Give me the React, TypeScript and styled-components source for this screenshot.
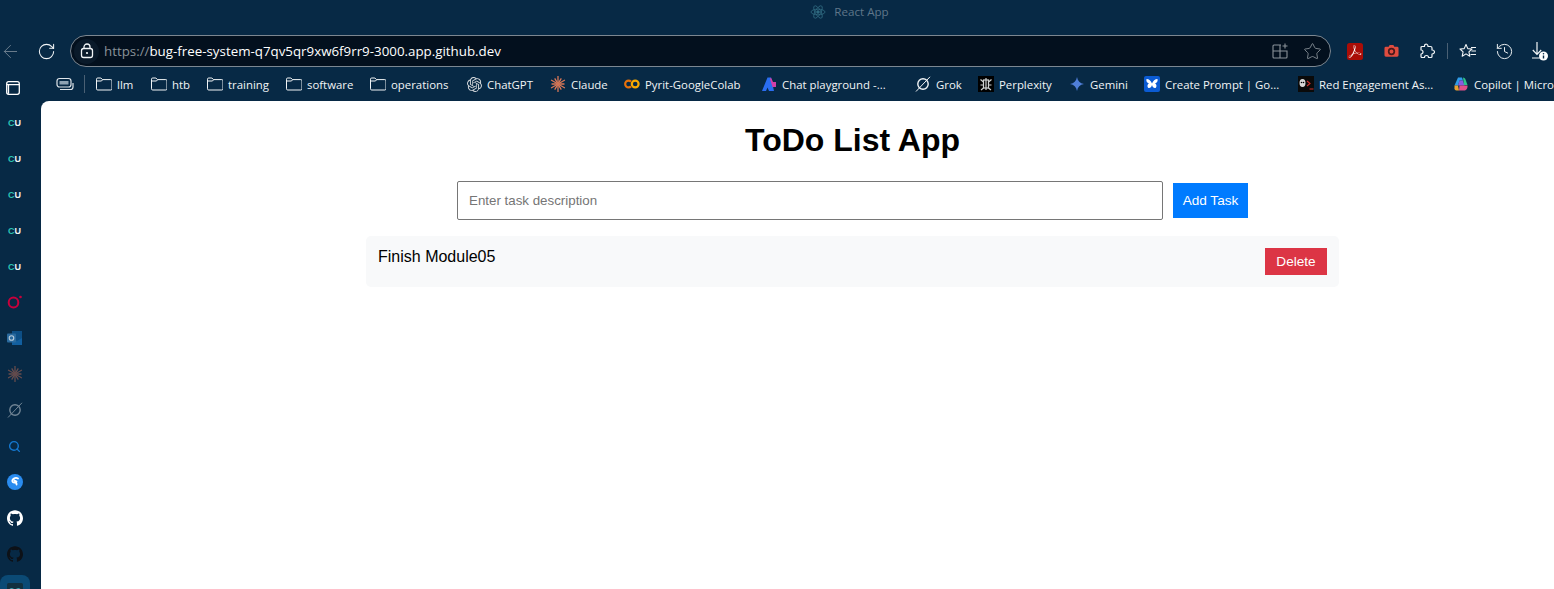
import React from "react";
import styled, { createGlobalStyle } from "styled-components";
import { ArrowLeft, RotateCw, Star, History, Search } from "lucide-react";
import { SiOpenai, SiGithub, SiAdobeacrobatreader } from "react-icons/si";

const chrome = "#072945";

const GlobalStyle = createGlobalStyle`
  html, body {
    margin: 0;
    padding: 0;
    width: 1554px;
    height: 589px;
    overflow: hidden;
    background: ${chrome};
  }
  * { box-sizing: border-box; }
`;

const Window = styled.div`
  width: 1554px;
  height: 589px;
  overflow: hidden;
  display: flex;
  flex-direction: column;
  background: ${chrome};
  font-family: "Open Sans", "Noto Sans", sans-serif;
  color: #fff;
`;

const TitleBar = styled.div`
  height: 35px;
  flex: none;
  display: flex;
  align-items: center;
  justify-content: center;
  gap: 8px;
  padding-bottom: 12px;
  padding-left: 145px;
  font-size: 11.6px;
  color: #5f7689;
`;

const NavBar = styled.div`
  height: 32px;
  flex: none;
  display: flex;
  align-items: center;
  margin-left: -8px;
`;

const NavButton = styled.div<{ $dim?: boolean }>`
  width: 36px;
  height: 32px;
  flex: none;
  display: flex;
  align-items: center;
  justify-content: center;
  color: ${(p) => (p.$dim ? "#6d7f8f" : "#f2f5f7")};
`;

const AddressBar = styled.div`
  width: 1261px;
  height: 32px;
  flex: none;
  margin: 0 6px;
  display: flex;
  align-items: center;
  padding: 0 2px 0 3px;
  background: #03101e;
  border: 1px solid #7c8791;
  border-radius: 16px;
`;

const LockPill = styled.div`
  width: 25px;
  height: 25px;
  flex: none;
  display: flex;
  align-items: center;
  justify-content: center;
  border-radius: 13px;
  background: #0a1a2a;
  color: #f2f5f7;
`;

const Url = styled.div`
  flex: 1;
  margin-left: 5px;
  font-size: 13.33px;
  white-space: nowrap;
  color: #fff;
  span {
    color: #8a9299;
  }
`;

const AddressAction = styled.div`
  width: 32px;
  display: flex;
  justify-content: center;
  color: #8a9299;
`;

const ToolbarDivider = styled.div`
  width: 1px;
  height: 16px;
  margin: 0 2px;
  flex: none;
  background: #4a6074;
`;

const BookmarksBar = styled.div`
  height: 34px;
  flex: none;
  display: flex;
  align-items: center;
  padding-left: 5px;
  font-size: 11.4px;
  white-space: nowrap;
`;

const PanelSlot = styled.span`
  width: 16px;
  height: 16px;
  flex: none;
  margin: 8px 35px 0 0;
`;

const TabsSlot = styled.span`
  width: 18px;
  height: 16px;
  flex: none;
`;

const BarDivider = styled.div`
  width: 1px;
  height: 18px;
  margin: 0 11px 0 10px;
  flex: none;
  background: #4a6074;
`;

const Bookmark = styled.div<{ $width: number }>`
  width: ${(p) => p.$width}px;
  flex: none;
  display: flex;
  align-items: center;
  gap: 5px;
  color: #f1f4f6;
`;

const BookmarkIcon = styled.span`
  width: 16px;
  height: 16px;
  flex: none;
  display: flex;
  align-items: center;
  justify-content: center;
`;

const Body = styled.div`
  flex: 1;
  min-height: 0;
  display: flex;
`;

const Sidebar = styled.div`
  width: 41px;
  flex: none;
  padding-top: 3px;
  display: flex;
  flex-direction: column;
  align-items: flex-start;
`;

const SideItem = styled.div<{ $faded?: boolean }>`
  width: 29px;
  height: 36px;
  flex: none;
  display: flex;
  align-items: center;
  justify-content: center;
  opacity: ${(p) => (p.$faded ? 0.45 : 1)};
`;

const ActiveSideItem = styled.div`
  width: 30px;
  height: 30px;
  flex: none;
  margin-top: 3px;
  padding-top: 8px;
  display: flex;
  justify-content: center;
  border-radius: 8px;
  background: #0b4a75;
`;

const CuBadge = styled.span`
  font-family: "Liberation Sans", sans-serif;
  font-size: 9px;
  font-weight: 700;
  color: #f0f4f5;
  padding-top: 2px;
  b {
    color: #2cc4b4;
  }
`;

const Main = styled.main`
  width: 1623px;
  flex: none;
  background: #fff;
  border-top-left-radius: 8px;
  padding-top: 21px;
  font-family: "Liberation Sans", Arial, sans-serif;
  color: #000;
`;

const Heading = styled.h1`
  margin: 0 0 22px;
  font-size: 32px;
  line-height: 37px;
  font-weight: 700;
  text-align: center;
`;

const TaskForm = styled.form`
  width: 791px;
  margin: 0 auto 16px;
  display: flex;
  align-items: center;
  gap: 10px;
`;

const TaskInput = styled.input`
  flex: 1;
  height: 39px;
  padding: 0 11px;
  border: 1px solid #767676;
  border-radius: 2px;
  font-family: inherit;
  font-size: 13.33px;
  &::placeholder {
    color: #757575;
  }
`;

const ActionButton = styled.button<{ $color: string }>`
  border: none;
  padding: 0;
  color: #fff;
  background: ${(p) => p.$color};
  font-family: inherit;
  font-size: 13.6px;
`;

const AddButton = styled(ActionButton)`
  width: 75px;
  height: 35px;
`;

const DeleteButton = styled(ActionButton)`
  width: 62px;
  height: 27px;
`;

const TaskCard = styled.div`
  width: 973px;
  margin: 0 auto;
  padding: 12px;
  display: flex;
  justify-content: space-between;
  align-items: flex-start;
  background: #f8f9fa;
  border-radius: 5px;
`;

const TaskText = styled.span`
  font-size: 16px;
  line-height: 18px;
`;

const ReactLogo = () => (
  <svg width="16" height="16" viewBox="-12 -12 24 24" fill="none" stroke="#2f6a80" strokeWidth="1.2">
    <circle r="2" fill="#2f6a80" />
    <ellipse rx="10.5" ry="4.2" />
    <ellipse rx="10.5" ry="4.2" transform="rotate(60)" />
    <ellipse rx="10.5" ry="4.2" transform="rotate(120)" />
  </svg>
);

const LockIcon = () => (
  <svg width="14" height="16" viewBox="0 0 14 16" fill="none" stroke="currentColor" strokeWidth="1.3">
    <rect x="1.5" y="5.5" width="11" height="9" rx="2.2" />
    <path d="M4 5.500V4a3 3 0 0 1 6 0v1.500" />
    <circle cx="7" cy="10" r="1.100" fill="currentColor" stroke="none" />
  </svg>
);

const PanelIcon = () => (
  <svg width="16" height="16" viewBox="0 0 16 16" fill="none" stroke="#fff" strokeWidth="1.3">
    <rect x="1.700" y="1.700" width="12.600" height="12.600" rx="2" />
    <path d="M2 4.700h12M3.500 4.700v9" />
  </svg>
);

const SplitIcon = () => (
  <svg width="16" height="16" viewBox="0 0 16 16" fill="none" stroke="currentColor" strokeWidth="1.1">
    <path d="M9 2H2a1 1 0 0 0-1 1v11a1 1 0 0 0 1 1h12a1 1 0 0 0 1-1V8H1" />
    <path d="M8 2v13M13 0.500v5M10.500 3h5" />
  </svg>
);

const PuzzleIcon = () => (
  <svg width="16" height="16" viewBox="0 0 16 16" fill="none" stroke="#f2f5f7" strokeWidth="1.2" strokeLinejoin="round">
    <path d="M6 1.500c1.500-1 3 0 3 2h2.500A1.500 1.500 0 0 1 13 5v2c1.500 0 2.500.8 2.500 2s-1 2-2.500 2v2.500a1 1 0 0 1-1 1H9.500c0-1.500-.8-2-2-2s-2 .5-2 2H3a1 1 0 0 1-1-1V11c1.300 0 2-1 2-2S3.300 7 2 7V4.500a1 1 0 0 1 1-1h2.500c0-.8 0-1.500.5-2z" />
  </svg>
);

const FavoritesIcon = () => (
  <svg width="18" height="18" viewBox="0 0 18 18" fill="none" stroke="#f2f5f7" strokeWidth="1.1" strokeLinejoin="round">
    <path d="M7 2.500l1.800 4.100 4.200.4-3.100 2.900.9 4.300L7 11.900l-3.800 2.300.9-4.300L1 7l4.200-.4z" />
    <path d="M12 5.500h5M12.500 9h4.500M11.500 12.500h5.500" />
  </svg>
);

const DownloadIcon = () => (
  <svg width="18" height="20" viewBox="0 0 18 20" fill="none" stroke="#f2f5f7" strokeWidth="1.2">
    <path d="M6 1v12M1.800 9l4.200 4.300L10.200 9M1 17h8" />
    <circle cx="12.500" cy="15" r="4.500" fill="#fff" stroke="none" />
    <path d="M12.500 14.500v3" stroke="#072945" strokeWidth="1.400" />
    <circle cx="12.500" cy="12.700" r=".8" fill="#072945" stroke="none" />
  </svg>
);

const TabsIcon = () => (
  <svg width="18" height="16" viewBox="0 0 18 16" fill="none" stroke="#dfe5ea" strokeWidth="1.2">
    <rect x="1" y="2.500" width="14" height="8.500" rx="2.500" />
    <rect x="3.500" y="5" width="9" height="3.500" fill="#8fa3b3" stroke="none" />
    <path d="M4 13.500h10.500a2.500 2.500 0 0 0 2.500-2.500V7" />
  </svg>
);

const FolderIcon = () => (
  <svg width="16" height="16" viewBox="0 0 16 16" fill="none" stroke="#f1f4f6" strokeWidth="1">
    <path d="M.5 3.200a1.200 1.200 0 0 1 1.200-1.200h3.200l1.500 1.600h8.400a1.200 1.200 0 0 1 1.200 1.200v8a1.200 1.200 0 0 1-1.200 1.200H1.700a1.200 1.200 0 0 1-1.200-1.200z" />
    <path d="M.5 5h5l1.200-1.400" />
  </svg>
);

const ClaudeIcon = () => (
  <svg width="16" height="16" viewBox="-8 -8 16 16" stroke="#d97757" strokeWidth="1.3" strokeLinecap="round">
    {[0, 30, 60, 90, 120, 150, 180, 210, 240, 270, 300, 330].map((a) => (
      <line key={a} x1="0" y1="-1" x2="0" y2={a % 60 === 0 ? -7.5 : -6} transform={`rotate(${a})`} />
    ))}
  </svg>
);

const ColabIcon = () => (
  <svg width="16" height="16" viewBox="0 0 16 16" fill="none" strokeWidth="2.2">
    <circle cx="11.200" cy="8" r="3.400" stroke="#f9ab00" />
    <path d="M7 5.600a3.400 3.400 0 1 0 0 4.800" stroke="#e8710a" />
  </svg>
);

const AzureIcon = () => (
  <svg width="16" height="16" viewBox="0 0 16 16">
    <path d="M1 15L6.500 1.500h3.500L13 15H8L6.500 11.500 5 15z" fill="#2a6df0" />
    <path d="M9 3l1-1.500L12 6h3v5h-3.500z" fill="#d23fa8" />
  </svg>
);

const GrokIcon = ({ color = "#f1f4f6" }: { color?: string }) => (
  <svg width="16" height="16" viewBox="0 0 16 16" fill="none" stroke={color} strokeWidth="1.4">
    <circle cx="8" cy="8" r="5.200" />
    <path d="M1 15.500L15 .8" strokeWidth="1" />
  </svg>
);

const PerplexityIcon = () => (
  <svg width="16" height="16" viewBox="0 0 16 16">
    <rect width="16" height="16" fill="#000" />
    <g stroke="#cfd2d2" strokeWidth="1.200" fill="none">
      <rect x="5.500" y="4" width="5" height="8" />
      <path d="M8 2v12M5.500 6L2.500 3.500M10.500 6l3-2.500M5.500 9H2.500M10.500 9h3M5.500 12l-2.500 2M10.500 12l2.500 2" />
    </g>
  </svg>
);

const GeminiIcon = () => (
  <svg width="16" height="16" viewBox="0 0 16 16">
    <path d="M8 1c.7 3.900 3 6.300 7 7-4 .7-6.300 3.100-7 7-.7-3.900-3-6.300-7-7 4-.7 6.300-3.100 7-7z" fill="#4f7ed8" />
  </svg>
);

const ButterflyIcon = () => (
  <svg width="16" height="16" viewBox="0 0 16 16">
    <rect width="16" height="16" rx="2" fill="#0b5bd3" />
    <path d="M8 7.500C7 5 5 3 2.500 3c-.5 2 .3 4 2.500 4.500C3.500 8 2.800 10.500 4.500 12c1.500.5 3-1 3.500-3 .5 2 2 3.500 3.500 3 1.700-1.500 1-4-.5-4.500 2.200-.5 3-2.500 2.500-4.500C11 3 9 5 8 7.500z" fill="#fff" />
  </svg>
);

const TerminalIcon = () => (
  <svg width="16" height="16" viewBox="0 0 16 16">
    <rect width="16" height="16" fill="#0a0a0a" />
    <ellipse cx="4.500" cy="7" rx="3" ry="4" fill="#d8d8d8" />
    <circle cx="3.500" cy="6.500" r=".8" fill="#000" />
    <circle cx="5.500" cy="6.500" r=".8" fill="#000" />
    <path d="M9 5l3 2.500L9 10M11.500 13h4" stroke="#d0302c" strokeWidth="1.100" fill="none" />
  </svg>
);

const CopilotIcon = () => (
  <svg width="16" height="16" viewBox="0 0 16 16">
    <path d="M5 1.500h4l1 3H6.500L5 9.500H1.500z" fill="#2f9be8" />
    <path d="M6.500 4.500H10l1.500 5H5z" fill="#8a5be0" />
    <path d="M10 1.500c1.500 0 2.200 1 2.500 2l2 5.500H11z" fill="#2fc28a" />
    <path d="M1.500 9.500H5l1 5H3.500c-1.500 0-2.500-1.500-2-3z" fill="#e8a030" />
    <path d="M6 14.500l.5-5h8c.3 3-1.500 5-3.500 5z" fill="#e0508a" />
  </svg>
);

const PdfBadge = () => (
  <svg width="16" height="17" viewBox="0 0 16 17">
    <rect width="16" height="17" rx="2.500" fill="#aa0d07" />
    <g transform="translate(1.500 2)">
      <SiAdobeacrobatreader size={13} color="#fff" />
    </g>
  </svg>
);

const CameraIcon = () => (
  <svg width="15" height="16" viewBox="0 0 16 16">
    <path d="M2 3.500h3l1-1.800h4l1 1.800h3A1.500 1.500 0 0 1 15.500 5v7.500A1.500 1.500 0 0 1 14 14H2a1.500 1.500 0 0 1-1.500-1.500V5A1.500 1.500 0 0 1 2 3.500z" fill="#e04c3f" />
    <circle cx="8" cy="8.500" r="3" fill="none" stroke="#4a1a1c" strokeWidth="1.800" />
  </svg>
);

const OperaIcon = () => (
  <svg width="16" height="16" viewBox="0 0 16 16" fill="none">
    <ellipse cx="6.500" cy="8.500" rx="4.800" ry="5" stroke="#c8003c" strokeWidth="2" />
    <circle cx="13.500" cy="3" r="1.300" fill="#c8003c" />
  </svg>
);

const OutlookIcon = () => (
  <svg width="16" height="16" viewBox="0 0 16 16">
    <rect x="5" y="1" width="10" height="13" fill="#0d4f86" />
    <path d="M5 8l5 3 5-3v7H5z" fill="#125f9f" />
    <rect x="0" y="3.500" width="9" height="9" rx="1" fill="#2a6a9e" />
    <circle cx="4.500" cy="8" r="2.300" fill="none" stroke="#b8ccdc" strokeWidth="1.100" />
  </svg>
);

const SwirlIcon = () => (
  <svg width="16" height="16" viewBox="0 0 16 16">
    <circle cx="8" cy="8" r="8" fill="#2a8cf0" />
    <path d="M11 4.500a4 4 0 0 0-5.500 1.500c-.8 1.500.5 2.500 2 2.500s2.500 1 2 2M7.500 6.500l2 1" fill="none" stroke="#fff" strokeWidth="1.800" strokeLinecap="round" />
  </svg>
);

const CoverIcon = () => (
  <svg width="16" height="16" viewBox="0 0 16 16">
    <rect width="16" height="16" rx="1.500" fill="#12303f" />
    <path d="M2 8c1-3 4-3 6 0s5 3 6 0c-1-3-4-3-6 0s-5 3-6 0z" fill="none" stroke="#48c0d0" strokeWidth="1.200" />
  </svg>
);

const bookmarks: { label: string; width: number; icon: React.ReactNode }[] = [
  { label: "llm", width: 55, icon: <FolderIcon /> },
  { label: "htb", width: 56, icon: <FolderIcon /> },
  { label: "training", width: 79, icon: <FolderIcon /> },
  { label: "software", width: 84, icon: <FolderIcon /> },
  { label: "operations", width: 96, icon: <FolderIcon /> },
  { label: "ChatGPT", width: 84, icon: <SiOpenai size={15} color="#d4d8db" /> },
  { label: "Claude", width: 74, icon: <ClaudeIcon /> },
  { label: "Pyrit-GoogleColab", width: 137, icon: <ColabIcon /> },
  { label: "Chat playground -...", width: 154, icon: <AzureIcon /> },
  { label: "Grok", width: 63, icon: <GrokIcon /> },
  { label: "Perplexity", width: 91, icon: <PerplexityIcon /> },
  { label: "Gemini", width: 75, icon: <GeminiIcon /> },
  { label: "Create Prompt | Go...", width: 154, icon: <ButterflyIcon /> },
  { label: "Red Engagement As...", width: 155, icon: <TerminalIcon /> },
  { label: "Copilot | Microsoft 365", width: 160, icon: <CopilotIcon /> },
];

const App = () => (
  <Window>
    <GlobalStyle />
    <TitleBar>
      <ReactLogo />
      React App
    </TitleBar>
    <NavBar>
      <NavButton $dim>
        <ArrowLeft size={21} strokeWidth={1.1} />
      </NavButton>
      <NavButton>
        <RotateCw size={19} strokeWidth={1.3} />
      </NavButton>
      <AddressBar>
        <LockPill>
          <LockIcon />
        </LockPill>
        <Url>
          <span>https://</span>bug-free-system-q7qv5qr9xw6f9rr9-3000.app.github.dev
        </Url>
        <AddressAction>
          <SplitIcon />
        </AddressAction>
        <AddressAction>
          <Star size={19} strokeWidth={1.1} />
        </AddressAction>
      </AddressBar>
      <NavButton>
        <PdfBadge />
      </NavButton>
      <NavButton>
        <CameraIcon />
      </NavButton>
      <NavButton>
        <PuzzleIcon />
      </NavButton>
      <ToolbarDivider />
      <NavButton>
        <FavoritesIcon />
      </NavButton>
      <NavButton>
        <History size={19} strokeWidth={1.2} />
      </NavButton>
      <NavButton>
        <DownloadIcon />
      </NavButton>
    </NavBar>
    <BookmarksBar>
      <PanelSlot>
        <PanelIcon />
      </PanelSlot>
      <TabsSlot>
        <TabsIcon />
      </TabsSlot>
      <BarDivider />
      {bookmarks.map((b) => (
        <Bookmark key={b.label} $width={b.width}>
          <BookmarkIcon>{b.icon}</BookmarkIcon>
          {b.label}
        </Bookmark>
      ))}
    </BookmarksBar>
    <Body>
      <Sidebar>
        {[0, 1, 2, 3, 4].map((i) => (
          <SideItem key={i}>
            <CuBadge>
              <b>C</b>U
            </CuBadge>
          </SideItem>
        ))}
        <SideItem>
          <OperaIcon />
        </SideItem>
        <SideItem>
          <OutlookIcon />
        </SideItem>
        <SideItem $faded>
          <ClaudeIcon />
        </SideItem>
        <SideItem $faded>
          <GrokIcon />
        </SideItem>
        <SideItem>
          <Search size={13} color="#1478d0" strokeWidth={2.6} />
        </SideItem>
        <SideItem>
          <SwirlIcon />
        </SideItem>
        <SideItem>
          <SiGithub size={16} color="#fff" />
        </SideItem>
        <SideItem>
          <SiGithub size={16} color="#0d1117" />
        </SideItem>
        <ActiveSideItem>
          <CoverIcon />
        </ActiveSideItem>
      </Sidebar>
      <Main>
        <Heading>ToDo List App</Heading>
        <TaskForm>
          <TaskInput placeholder="Enter task description" />
          <AddButton type="button" $color="#007bff">
            Add Task
          </AddButton>
        </TaskForm>
        <TaskCard>
          <TaskText>Finish Module05</TaskText>
          <DeleteButton type="button" $color="#dc3545">
            Delete
          </DeleteButton>
        </TaskCard>
      </Main>
    </Body>
  </Window>
);

export default App;
